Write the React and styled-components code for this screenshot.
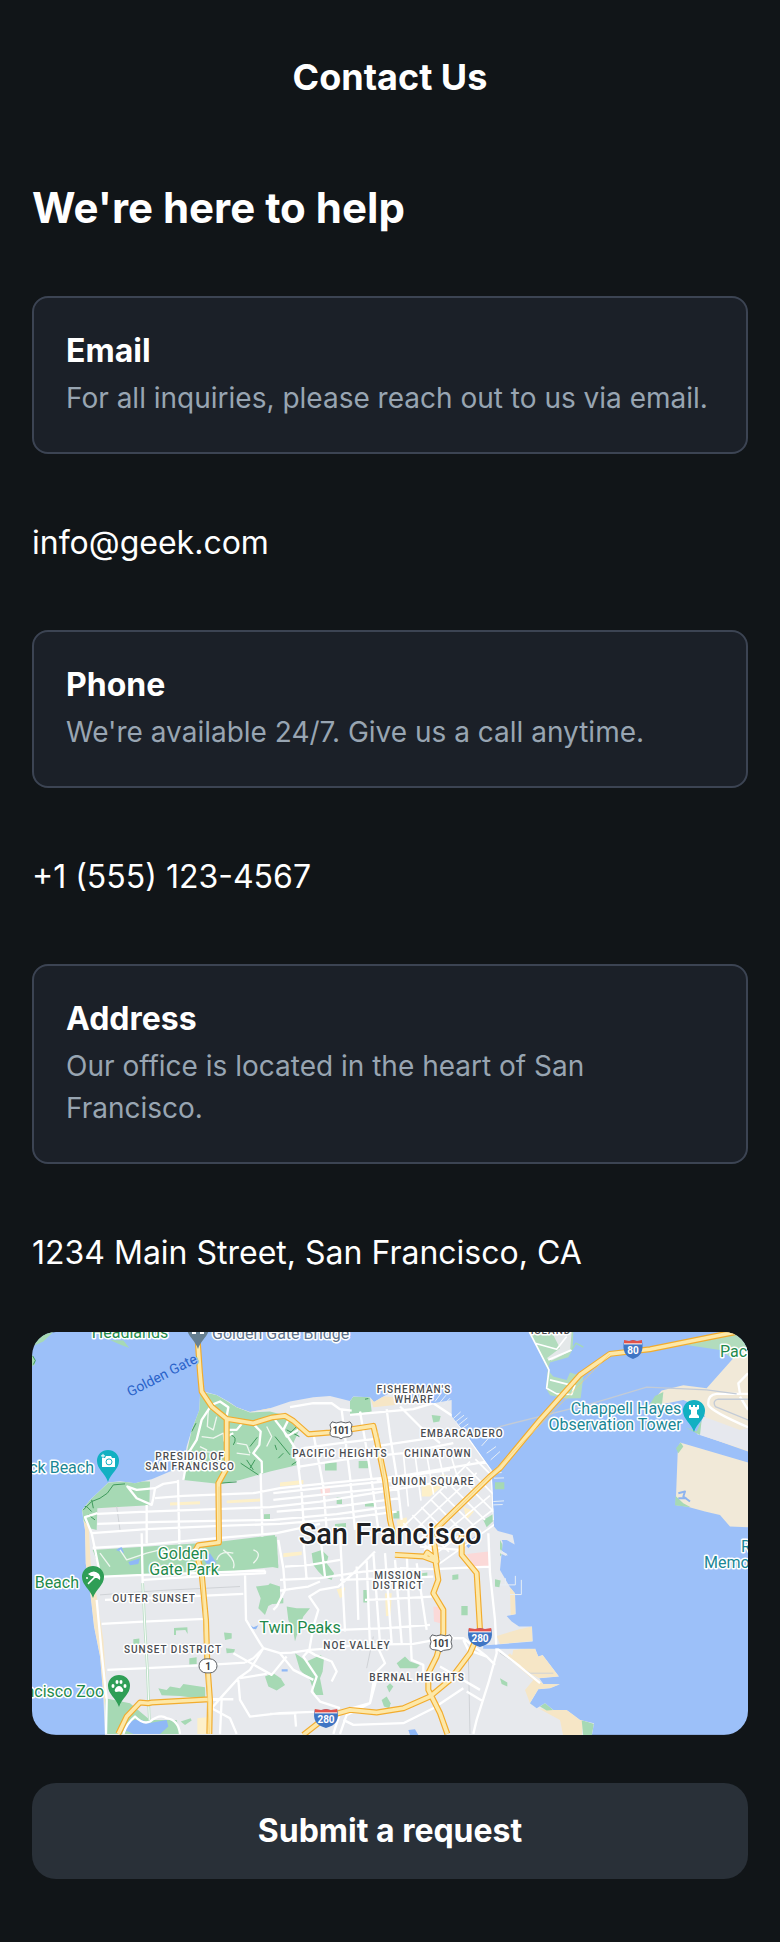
import React from "react";
import styled, { createGlobalStyle } from "styled-components";

const GlobalStyle = createGlobalStyle`
  *, *::before, *::after { box-sizing: border-box; }
  body {
    margin: 0;
    background: #111518;
    color: #ffffff;
    font-family: Inter, "Noto Sans", sans-serif;
  }
  h1, h2, h3, p { margin: 0; }
`;

const Page = styled.div`
  display: flex;
  flex-direction: column;
  min-height: 100vh;
  padding: 0 32px 48px;
`;

const Header = styled.header`
  padding: 54px 0 80px;
  text-align: center;
`;

const PageTitle = styled.h1`
  font-size: 36px;
  line-height: 46px;
  font-weight: 700;
`;

const Main = styled.main`
  display: flex;
  flex-direction: column;
`;

const Headline = styled.h2`
  margin-bottom: 60px;
  font-size: 42px;
  line-height: 56px;
  font-weight: 700;
`;

const Card = styled.section`
  display: flex;
  flex-direction: column;
  gap: 5px;
  padding: 32px 32px 33px;
  border: 2px solid #3c4453;
  border-radius: 16px;
  background: #1b2028;
`;

const CardTitle = styled.h3`
  font-size: 32px;
  line-height: 42px;
  font-weight: 700;
`;

const CardText = styled.p`
  color: #98a5b2;
  font-size: 28px;
  line-height: 42px;
  font-weight: 400;
`;

const ContactValue = styled.p`
  padding: 65px 0 ${(p) => (p.$last ? 55 : 63)}px;
  font-size: 32px;
  line-height: 48px;
  font-weight: 400;
`;

const ContactLink = styled.a`
  color: inherit;
  text-decoration: none;
`;

const MapFrame = styled.figure`
  margin: 0 0 48px;
  border-radius: 24px;
  overflow: hidden;
  aspect-ratio: 16 / 9;
`;

const MapSvg = styled.svg`
  display: block;
  width: 100%;
  height: 100%;
`;

const MapLabel = styled.text`
  fill: ${(p) => p.$color || "#4a4d52"};
  stroke: ${(p) => p.$halo || "#ffffff"};
  stroke-width: 3px;
  stroke-linejoin: round;
  paint-order: stroke;
  text-anchor: ${(p) => p.$anchor || "middle"};
  font-family: Roboto, sans-serif;
  font-size: 16px;
  font-weight: 400;
`;

const WaterLabel = styled(MapLabel)`
  font-size: 14px;
`;

const DistrictLabel = styled(MapLabel)`
  font-size: 10px;
  font-weight: 500;
  letter-spacing: 1px;
`;

const CityLabel = styled(MapLabel)`
  font-size: 29px;
  font-weight: 500;
`;

const ShieldText = styled.text`
  fill: ${(p) => p.$color || "#3c4043"};
  text-anchor: middle;
  font-family: Roboto, sans-serif;
  font-size: 10px;
  font-weight: 700;
`;

const SubmitButton = styled.button`
  width: 100%;
  padding: 24px;
  border: 0;
  border-radius: 24px;
  background: #293038;
  color: #ffffff;
  font-family: inherit;
  font-size: 32px;
  line-height: 48px;
  font-weight: 700;
  cursor: pointer;
`;

const MAINLAND =
  "M195 630L190 600L186 570L210 540L265 488L300 484L345 490L395 478L450 455L490 440L500 380L515 330L538 270L540 225L560 217L590 225L625 245L650 262L690 276L750 265L810 245L880 232L930 228L990 243L1000 230L1050 232L1062 246L1090 230L1120 213L1150 235L1240 250L1295 240L1295 290L1340 345L1375 395L1415 450L1422 620L1436 636L1448 668L1440 750L1470 802L1485 820L1487 883L1460 888L1475 905L1497 920L1536 920L1538 965L1390 977L1390 986L1545 985L1555 1010L1568 1005L1617 1070L1558 1075L1570 1092L1620 1093L1590 1105L1555 1108L1530 1150L1550 1165L1575 1150L1600 1170L1640 1170L1680 1200L1722 1210L1715 1250L255 1250L250 1130L240 1010L222 920L212 830L197 730Z";

const GREENS = [
  "M540 215L590 225L650 262L690 278L750 275L790 285L838 330L815 380L830 436L750 455L660 480L600 492L490 480L500 400L515 330L536 270Z",
  "M186 570L210 540L265 488L330 484L390 485L388 556L280 562L232 565L230 630L210 625L190 600Z",
  "M218 690L500 672L580 668L765 645L775 740L600 758L480 762L360 765L250 770Z",
  "M240 690L250 770L235 760Z",
  "M415 1105L440 1110L450 1100L480 1105L490 1092L555 1102L556 1138L480 1128L425 1126Z",
  "M255 1135L330 1150L390 1200L470 1200L480 1242L257 1242Z",
  "M708 800L745 795L750 790L780 800L780 840L745 858L735 885L715 865L722 835Z",
  "M735 1070L760 1060L782 1075L795 1095L770 1112L745 1100Z",
  "M875 700L905 690L925 710L920 730L942 760L935 780L910 770L895 755L880 735Z",
  "M720 810L750 805L770 825L790 835L790 850L760 852L730 840Z",
  "M800 860L830 865L870 865L850 890L835 930L825 965L820 935L805 900Z",
  "M825 1000L840 1010L860 1025L902 1005L912 1015L908 1055L900 1075L910 1125L885 1125L870 1080L840 1050Z",
  "M1130 1030L1155 1010L1170 1025L1200 1035L1190 1045L1140 1045Z",
  "M1100 1100L1110 1090L1120 1100L1108 1118Z",
  "M1085 1140L1100 1130L1112 1150L1108 1165L1092 1160Z",
  "M990 243L1000 230L1050 232L1055 275L990 285Z",
  "M1235 285L1262 288L1258 305L1240 308Z",
  "M915 428L950 428L950 452L915 452Z",
  "M1016 423L1045 423L1045 445L1016 445Z",
  "M950 532L966 532L966 552L950 552Z",
  "M1035 550L1062 548L1062 560L1035 560Z",
  "M1120 575L1138 573L1138 596L1120 596Z",
  "M945 612L978 609L978 622L945 624Z",
  "M1390 600L1420 582L1418 605L1400 622Z",
  "M1440 660L1456 690L1440 710Z",
  "M1030 810L1045 810L1044 848L1030 848Z",
  "M1205 760L1222 758L1222 770L1205 770Z",
  "M1297 765L1315 763L1315 778L1297 780Z",
  "M1324 858L1343 858L1343 886L1324 886Z",
  "M1425 778L1442 782L1438 802L1425 800Z",
  "M1440 1075L1462 1088L1462 1100L1445 1092Z",
  "M612 938L635 940L635 956L615 960Z",
  "M618 985L645 988L642 998L620 1000Z",
  "M462 924L502 922L503 942L496 930L468 932L468 945L462 945Z",
  "M340 958L358 956L358 972L340 974Z",
  "M508 1015L530 1012L530 1032L508 1034Z",
  "M482 1205L512 1195L515 1202L495 1215Z",
  "M732 583L750 582L750 600L732 600Z",
  "M750 655L770 650L775 745L750 740Z",
  "M1530 1150L1548 1130L1545 1160Z",
  "M1560 1160L1575 1148L1600 1170L1580 1172Z",
  "M1685 1200L1722 1212L1715 1250L1690 1250Z",
];

const SANDS = [
  "M195 630L190 600L205 605L212 730L230 830L250 960L262 1130L262 1200L250 1130L240 1010L222 920L212 830L197 730Z",
  "M625 245L680 268L750 262L750 268L690 276L650 262Z",
  "M1052 235L1090 230L1122 232L1125 255L1060 262Z",
  "M1498 928L1536 920L1538 963L1440 972L1430 948Z",
  "M1480 990L1545 985L1555 1010L1568 1005L1617 1070L1558 1075L1530 1060L1475 1012Z",
  "M1470 1000L1530 1060L1570 1092L1620 1093L1590 1105L1555 1108L1530 1150L1515 1110L1540 1080L1460 1010Z",
  "M1555 1165L1600 1170L1640 1170L1690 1200L1685 1250L1630 1250L1620 1200Z",
  "M1470 802L1485 820L1487 883L1472 885Z",
  "M1490 990L1530 985L1530 1055L1495 1030Z",
];

const BLOCKS = [
  ["#fbd9d8", "M250 538L295 530L297 562L250 562Z"],
  ["#fbd9d8", "M1340 702L1405 695L1408 740L1365 742Z"],
  ["#fbd9d8", "M1240 860L1262 862L1260 910L1242 905Z"],
  ["#fbd9d8", "M900 505L930 500L930 525L905 530Z"],
  ["#fdf0c9", "M450 548L540 544L540 553L450 557Z"],
  ["#fdf0c9", "M620 542L720 536L720 545L620 550Z"],
  ["#fdf0c9", "M780 488L850 480L850 492L780 500Z"],
  ["#fdf0c9", "M1095 820L1115 820L1112 888L1098 888Z"],
  ["#fdf0c9", "M950 808L976 803L968 830L960 835Z"],
  ["#fdf0c9", "M1130 600L1160 592L1165 630L1135 640Z"],
  ["#fdf0c9", "M1205 500L1240 490L1270 460L1290 480L1230 530L1205 530Z"],
  ["#fdf0c9", "M1330 560L1362 575L1340 600Z"],
  ["#fdf0c9", "M532 1195L560 1192L560 1242L532 1242Z"],
  ["#fdf0c9", "M790 700L845 695L845 705L790 712Z"],
];

const LAKES =
  "M330 1205Q360 1190 385 1210L440 1200L445 1220L420 1242L340 1242L315 1230ZM550 715L570 700L590 730L560 732ZM288 690L305 680L312 700ZM325 726L360 715L355 732L330 736ZM680 908L700 922L715 916L708 928L695 926ZM1165 1230L1185 1228L1195 1245L1170 1245ZM1335 672L1365 650L1368 660L1345 685ZM785 1048L803 1048L803 1055L785 1055Z";

const STREETS = [
  // Richmond
  "M405 535L490 528L700 520L780 505L940 488L1130 470L1400 425",
  "M232 582L380 575L750 562L900 545L1060 520L1240 490",
  "M232 612L420 606L760 600L950 583L1110 560",
  "M215 640L380 628L600 618L780 612L980 595L1130 575",
  "M218 684L380 674L530 660L770 640L900 612",
  "M380 555L380 670M474 480L478 672M722 460L727 650M232 580L195 592L215 640L240 762",
  // northern coast and Presidio
  "M475 485L430 492L405 505L350 510L322 500L350 535L395 555L400 535L405 505",
  "M490 480L505 400L530 360L545 300L575 255L600 245L625 262L620 290",
  "M700 312L722 335L718 375L700 400L725 425L726 460",
  "M620 330L650 330L665 312M620 350L640 340",
  "M810 290L790 330L800 350L835 330M810 262L880 250L935 250L960 268L995 272",
  "M765 300L800 345L835 400L838 450",
  "M990 285L1180 268L1240 250L1300 290L1415 450L1422 600",
  "M838 440L1000 415L1150 400L1300 370M850 385L960 370L1060 358",
  "M830 400L845 520L852 630M880 340L910 500L920 630M965 270L975 350L990 470L1005 630M1020 275L1035 360L1055 480L1075 630M1100 268L1110 345L1130 470L1145 600",
  "M1060 380L1250 352M1140 260L1200 320L1260 370M1070 480L1160 468L1290 450",
  "M760 520L940 500L1120 482M760 540L950 520L1140 500M770 575L950 560L1140 535",
  // Sunset
  "M250 770L370 765L735 752M370 780L600 766L735 760L735 752",
  "M255 840L460 832L670 822M245 912L370 905L555 897M262 1050L380 1045L530 1037L675 1028",
  "M365 640L368 790M478 632L478 672",
  "M675 760L678 900L720 970L730 985L700 1015L675 1028",
  "M730 985L690 1050L655 1075L610 1125L575 1165L630 1195L650 1242",
  "M730 985L780 1000L815 998L870 990L940 985L1010 975L1180 972L1300 950",
  "M640 1000L755 1065L800 1010M660 1075L740 1062M655 1080L660 1140L690 1190L780 1180L900 1175L960 1175L1050 1150L1070 1075",
  "M230 840L245 1000L260 1140L258 1242",
  "M580 1140L605 1138L600 1242M570 1138L640 1138",
  // Twin Peaks and Noe Valley
  "M780 780L900 775L1030 755L1160 745M780 812L830 805L865 800L900 785",
  "M1065 695L1000 760L955 800L900 810L868 830L895 870L880 920L868 990L850 1010L890 1070L875 1115L900 1145L960 1165",
  "M780 1000L820 1050L880 1080M860 990L885 1005L935 1025L950 1055L935 1085",
  "M775 660L790 745L795 810L770 860L760 870M795 740L870 735L960 720",
  "M850 660L860 780M900 640L915 770M960 640L975 935",
  "M1060 700L1080 970M1095 700L1115 970M1125 720L1145 970M1160 700L1175 1020L1210 1035L1210 1060",
  "M1190 730L1220 930M1040 720L1050 980M1010 740L1015 900",
  "M960 930L1100 925L1230 915M1035 840L1100 838L1235 830M960 780L1120 775L1240 770",
  "M1140 745L1240 748L1410 740M1200 680L1320 690",
  "M1405 640L1410 760L1425 900L1430 1000L1405 1090L1370 1200L1360 1242",
  "M1270 955L1330 955L1400 1010L1425 1035M1330 960L1345 990L1400 1010M1380 1110L1260 1040",
  "M1340 1115L1390 1145M1330 1105L1240 1165L1150 1210L1000 1215L970 1200",
  "M750 1182L830 1180M825 1182L828 1220M960 1180L940 1242M1050 1150L980 1185L960 1242",
  "M1070 975L1095 1030L1065 1060L1050 1150",
  // south-east waterfront
  "M1430 985L1500 1040L1560 1090",
];

// The streets south of Market run diagonally to the rest of the grid.
const DOWNTOWN = [];
for (let i = 0; i < 9; i += 1) {
  const a = 1150 + i * 27;
  DOWNTOWN.push(`M${a} ${610 - i * 24}L${a + 110} ${720 - i * 24}`);
}
for (let i = 0; i < 6; i += 1) {
  DOWNTOWN.push(`M${1140 + i * 24} ${630 + i * 20}L${1350 + i * 20} ${425 + i * 34}`);
}
for (let i = 0; i < 5; i += 1) {
  DOWNTOWN.push(`M${1150 + i * 34} ${400 - i * 4}L${1165 + i * 38} ${560 - i * 18}`);
}

const PIERS =
  "M1245 245L1262 222M1258 250L1278 226M1270 256L1290 235M1300 296L1322 276M1308 305L1332 286M1316 315L1342 294M1326 326L1345 312M1385 378L1410 350M1400 400L1428 380M1412 420L1440 395M1420 460L1445 458M1422 475L1452 474M1420 545L1452 543M1420 555L1448 554M1440 690L1462 706M1440 795L1486 795L1486 768M1470 824L1504 824L1504 780M1456 795L1456 775";

const DOCKS = "M1428 632L1478 645L1484 674L1460 660L1436 660ZM1436 690L1462 702L1458 708L1440 700Z";

const PRESIDIO_TRAILS =
  "M565 270L562 320L580 330L590 290M545 350L580 355L610 340L612 365M540 380L560 390L545 420M650 370L680 375L690 400M740 320L755 350L740 380M650 400L690 405M555 395L600 400L600 430M240 700L270 740M300 690L320 720L380 700L420 690M610 690Q650 720 640 745M590 720Q600 690 640 700M700 690Q730 700 700 730";

const WOODLAND =
  "M190 570L215 545L240 535L262 520L280 495L315 492M185 560L200 560L215 575M215 540L220 565M205 585L225 600M600 490L650 486M662 430L715 465M680 420L700 450M690 445L705 420M515 335L528 310M630 345Q655 350 640 375M765 350L810 405M800 330L838 350M805 345L830 320M775 415L790 400M815 435L830 425M1035 238L1045 236M690 380L712 352M765 375L770 390";

const PARK_EDGE = "M368 790L375 930L382 1045L388 1200";

const FREEWAYS = [
  "M533 60L540 160L545 215L575 260L620 297L700 310L755 293L795 288L820 303L865 343L930 338L1060 318L1070 360L1095 480L1110 600L1125 665",
  "M620 297L620 445L595 490L597 668L535 676L527 690L545 760L558 900L562 1030L570 1140L568 1242",
  "M2160 34L2080 50L1890 88L1770 102L1680 165L1560 300L1440 445L1410 470L1250 625L1225 655",
  "M1125 705L1210 710L1250 725L1240 650M1215 710L1222 698L1245 715L1255 780L1240 820L1270 870L1270 940L1250 1010L1225 1060L1225 1110L1260 1180L1282 1242",
  "M1325 645L1325 705L1370 760L1380 930L1350 1000L1290 1080L1230 1130L1150 1165L1070 1178L990 1170L920 1190L850 1245",
  "M295 1242L320 1190L360 1148L385 1150L395 1148L570 1138",
];

const PIN_BODY = "M0 0C-3 -9 -11 -13 -11 -21A11 11 0 0 1 11 -21C11 -13 3 -9 0 0Z";

function Pin({ x, y, color, children }) {
  return (
    <g transform={`translate(${x} ${y})`}>
      <path d={PIN_BODY} fill={color} />
      {children}
    </g>
  );
}

function Interstate({ x, y, wide, label }) {
  return (
    <g transform={`translate(${x} ${y})`}>
      <g transform={wide ? "scale(1.25 1)" : undefined}>
        <path
          d="M-9 -9Q-5 -8 0 -10Q5 -8 9 -9Q12 5 0 9Q-12 5 -9 -9Z"
          fill="#3f75c4"
        />
        <path d="M-9 -10L-4 -9L0 -10L4 -9L9 -10V-6H-9Z" fill="#e0524b" />
        <path d="M-9 -6H9" stroke="#ffffff" />
      </g>
      <ShieldText $color="#ffffff" y="4">
        {label}
      </ShieldText>
    </g>
  );
}

function UsRoute({ x, y, label }) {
  return (
    <g transform={`translate(${x} ${y})`}>
      <path
        d="M-9 -8Q-5 -6 0 -8Q5 -6 9 -8L11 -5Q9 -1 11 3Q11 7 6 7Q2 7 0 9Q-2 7 -6 7Q-11 7 -11 3Q-9 -1 -11 -5Z"
        fill="#ffffff"
        stroke="#5f6368"
      />
      <ShieldText y="4">{label}</ShieldText>
    </g>
  );
}

function CityMap() {
  return (
    <MapSvg
      viewBox="0 0 716 403"
      preserveAspectRatio="xMidYMid slice"
      role="img"
      aria-label="Map of San Francisco"
    >
      <defs>
        <clipPath id="mainland">
          <path d={MAINLAND} />
        </clipPath>
      </defs>
      <rect width="716" height="403" fill="#9cc0f9" />
      <g transform={`translate(-12 -12) scale(${1 / 3})`} fill="none" strokeLinejoin="round">
        {/* Marin headlands */}
        <path d="M36 36H100L70 65L36 80ZM36 105L46 120L44 135L36 138ZM270 60L310 62L328 84L300 74Z" fill="#a6d9b4" />
        <path d="M38 108L46 122L40 134" stroke="#3f9a5c" strokeWidth="3" />

        {/* Yerba Buena and Treasure Island */}
        <path d="M1530 36H1660L1658 88L1645 112L1590 128L1583 150L1600 170L1640 180L1650 158L1690 170L1682 235L1640 236L1590 226L1578 205L1583 150L1560 100Z" fill="#b2dcbd" />
        <path d="M1595 36H1655L1650 95L1595 122L1580 115L1620 85Z" fill="#e4e8e9" />
        <path d="M1528 36L1587 150L1580 205L1610 222L1655 224L1665 195M1545 70L1610 88L1640 50M1590 180L1650 195M1585 120L1655 90" stroke="#ffffff" strokeWidth="5" />
        <path d="M1655 90L1668 70L1690 82" stroke="#a6d9b4" strokeWidth="4" />

        {/* Alameda and Oakland */}
        <path d="M1980 72L2080 50L2184 36V130L2140 118L2100 90Z" fill="#b2dcbd" />
        <path d="M1890 252L1925 212L1990 196L2060 205L2140 115L2184 75V395L2035 342L2055 290L2040 262L1990 240L1930 252Z" fill="#f1e9d8" />
        <path d="M1890 252L1905 228L1930 216L1926 254Z" fill="#a6d9b4" />
        <path d="M2050 290L2160 330L2184 325V392L2030 342Z" fill="#e6e8ee" />
        <path d="M1980 368L2184 428V622L2130 620L2100 585L2055 575L2000 560L1967 555L1973 400Z" fill="#f1e9d8" />
        <path d="M1968 385L1982 368L1990 380L1975 400ZM1967 528L1990 550L2012 562L1965 556ZM1995 322L2040 345L2045 300L2030 335Z" fill="#a6d9b4" />
        <path d="M2184 222H2090Q2062 225 2065 255Q2075 275 2184 322M2160 222L2155 190L2184 160M2160 230L2184 270" stroke="#ffffff" strokeWidth="7" />
        <path d="M2184 238H2095Q2076 242 2086 260L2184 300M1440 320L1720 250L1880 202L2060 210L2150 222M1440 322L1340 345" stroke="#c3cbd6" strokeWidth="4" />
        <path d="M1975 520L1995 515L1990 530L2010 545M1975 535L2000 535" stroke="#8fb4ef" strokeWidth="6" />

        <path d={MAINLAND} fill="#e7e9ed" />
        <g clipPath="url(#mainland)">
          {SANDS.map((d) => (
            <path key={d} d={d} fill="#f6e6c6" />
          ))}
          {BLOCKS.map(([fill, d]) => (
            <path key={d} d={d} fill={fill} />
          ))}
          {GREENS.map((d) => (
            <path key={d} d={d} fill="#a6d9b4" />
          ))}
          <path d={LAKES} fill="#8fb8f6" />
          <path d="M1390 981H1545" stroke="#9cc0f9" strokeWidth="12" />
          <path d={WOODLAND} stroke="#3f9a5c" strokeWidth="3" />
          <path d="M240 825L420 812L660 800M290 560L300 630M1060 950L1040 1045M1345 1000L1350 1242M1440 1000L1530 1060L1600 1060" stroke="#cfd2d6" strokeWidth="3" />
          <path d={PRESIDIO_TRAILS} stroke="#eef6ef" strokeWidth="4" />
          <path d={DOWNTOWN.join("")} stroke="#ffffff" strokeWidth="5" />
          <path d={STREETS.join("")} stroke="#ffffff" strokeWidth="7" />
          <path d={PARK_EDGE} stroke="#b9dfc4" strokeWidth="8" />
          <path d={PARK_EDGE} stroke="#ffffff" strokeWidth="3" />
          <path d="M310 1242Q320 1210 345 1190Q370 1215 390 1205Q420 1180 440 1195Q475 1200 480 1242" stroke="#ffffff" strokeWidth="7" />
        </g>
        <path d={DOCKS} fill="#e7e9ed" />
        <path d={PIERS} stroke="#e7eef5" strokeWidth="3" />
        <path d="M1425 487H1453V508H1425Z" fill="#a6d9b4" />

        <path d={FREEWAYS.join("")} stroke="#f2ac2e" strokeWidth="18" />
        <path d={FREEWAYS.join("")} stroke="#fde8a8" strokeWidth="11" />
        <path d="M1072 330L1110 600M597 500L597 660M545 760L568 1242M1770 102L1225 655" stroke="#f6cf72" strokeWidth="2" />
      </g>

      <MapLabel x="98" y="6" $color="#1f8a4c">Headlands</MapLabel>
      <MapLabel x="180" y="7" $anchor="start" $color="#5d7189">Golden Gate Bridge</MapLabel>
      <WaterLabel
        transform="translate(98 65) rotate(-27)"
        $anchor="start"
        $color="#2a63c9"
        $halo="#9cc0f9"
      >
        Golden Gate
      </WaterLabel>
      <MapLabel x="62" y="141" $anchor="end" $color="#1a8796">ck Beach</MapLabel>
      <MapLabel x="594" y="82" $color="#1a8796">Chappell Hayes</MapLabel>
      <MapLabel x="583" y="98" $color="#1a8796">Observation Tower</MapLabel>
      <MapLabel x="688" y="25" $anchor="start" $color="#1f8a4c">Pac</MapLabel>
      <MapLabel x="709" y="220" $anchor="start" $color="#1a8796">R</MapLabel>
      <MapLabel x="672" y="236" $anchor="start" $color="#1a8796">Memo</MapLabel>
      <MapLabel x="151" y="227" $color="#1f8a4c">Golden</MapLabel>
      <MapLabel x="152" y="243" $color="#1f8a4c">Gate Park</MapLabel>
      <MapLabel x="47" y="256" $anchor="end" $color="#1f8a4c">Beach</MapLabel>
      <MapLabel x="72" y="365" $anchor="end" $color="#1f8a4c">ncisco Zoo</MapLabel>
      <MapLabel x="268" y="301" $color="#1f8a4c">Twin Peaks</MapLabel>

      <DistrictLabel x="519" y="2">ISLAND</DistrictLabel>
      <DistrictLabel x="158" y="128">PRESIDIO OF</DistrictLabel>
      <DistrictLabel x="158" y="138">SAN FRANCISCO</DistrictLabel>
      <DistrictLabel x="382" y="61">FISHERMAN'S</DistrictLabel>
      <DistrictLabel x="382" y="71">WHARF</DistrictLabel>
      <DistrictLabel x="430" y="105">EMBARCADERO</DistrictLabel>
      <DistrictLabel x="406" y="125">CHINATOWN</DistrictLabel>
      <DistrictLabel x="308" y="125">PACIFIC HEIGHTS</DistrictLabel>
      <DistrictLabel x="401" y="153">UNION SQUARE</DistrictLabel>
      <DistrictLabel x="122" y="270">OUTER SUNSET</DistrictLabel>
      <DistrictLabel x="141" y="321">SUNSET DISTRICT</DistrictLabel>
      <DistrictLabel x="366" y="247">MISSION</DistrictLabel>
      <DistrictLabel x="366" y="257">DISTRICT</DistrictLabel>
      <DistrictLabel x="325" y="317">NOE VALLEY</DistrictLabel>
      <DistrictLabel x="385" y="349">BERNAL HEIGHTS</DistrictLabel>

      <CityLabel x="358" y="212" $color="#202124">San Francisco</CityLabel>

      <UsRoute x={309} y={98} label="101" />
      <UsRoute x={409} y={311} label="101" />
      <Interstate x={601} y={18} label="80" />
      <Interstate x={448} y={306} wide label="280" />
      <Interstate x={294} y={387} wide label="280" />
      <rect x="167" y="327" width="18" height="14" rx="7" fill="#ffffff" stroke="#5f6368" />
      <ShieldText x="176" y="338">1</ShieldText>

      <Pin x={166} y={17} color="#667f90">
        <path d="M-6 -20H-2V-15H-6ZM2 -20H6V-15H2Z" fill="#ffffff" />
      </Pin>
      <Pin x={76} y={150} color="#12b0c2">
        <path d="M-6 -24H-3L-2 -26H3L4 -24H7V-15H-6Z" fill="#ffffff" />
        <circle cx="1" cy="-20" r="3" fill="none" stroke="#12b0c2" />
        <path d="M-7 -26H-3M-5 -28V-24" stroke="#ffffff" />
      </Pin>
      <Pin x={662} y={100} color="#12b0c2">
        <path
          d="M-5 -27H-3V-25H-1V-27H1V-25H3V-27H5V-23L3 -22V-18L5 -16V-14H-5V-16L-3 -18V-22L-5 -23Z"
          fill="#ffffff"
        />
      </Pin>
      <Pin x={61} y={266} color="#2f9e56">
        <path
          d="M-5 -24Q1 -29 6 -24Q8 -21 7 -18L4 -20L2 -20L0 -22L-2 -22Z"
          fill="#ffffff"
        />
        <path d="M2 -21L-5 -14" stroke="#ffffff" strokeWidth="1.5" />
        <circle cx="-6" cy="-20" r="1" fill="#ffffff" />
      </Pin>
      <Pin x={87} y={375} color="#2f9e56">
        <path d="M0 -21C3 -21 6 -16 3 -15Q0 -16 -3 -15C-6 -16 -3 -21 0 -21Z" fill="#ffffff" />
        <g fill="#ffffff">
          <ellipse cx="-6" cy="-21" rx="1.5" ry="2" />
          <ellipse cx="-2" cy="-25" rx="1.5" ry="2" />
          <ellipse cx="2" cy="-25" rx="1.5" ry="2" />
          <ellipse cx="6" cy="-21" rx="1.5" ry="2" />
        </g>
      </Pin>
    </MapSvg>
  );
}

export default function App() {
  return (
    <>
      <GlobalStyle />
      <Page>
        <Header>
          <PageTitle>Contact Us</PageTitle>
        </Header>
        <Main>
          <Headline>We're here to help</Headline>

          <Card>
            <CardTitle>Email</CardTitle>
            <CardText>For all inquiries, please reach out to us via email.</CardText>
          </Card>
          <ContactValue>
            <ContactLink href="mailto:info@geek.com">info@geek.com</ContactLink>
          </ContactValue>

          <Card>
            <CardTitle>Phone</CardTitle>
            <CardText>We're available 24/7. Give us a call anytime.</CardText>
          </Card>
          <ContactValue>
            <ContactLink href="tel:+15551234567">+1 (555) 123-4567</ContactLink>
          </ContactValue>

          <Card>
            <CardTitle>Address</CardTitle>
            <CardText>Our office is located in the heart of San Francisco.</CardText>
          </Card>
          <ContactValue $last>1234 Main Street, San Francisco, CA</ContactValue>

          <MapFrame>
            <CityMap />
          </MapFrame>

          <SubmitButton type="button">Submit a request</SubmitButton>
        </Main>
      </Page>
    </>
  );
}
